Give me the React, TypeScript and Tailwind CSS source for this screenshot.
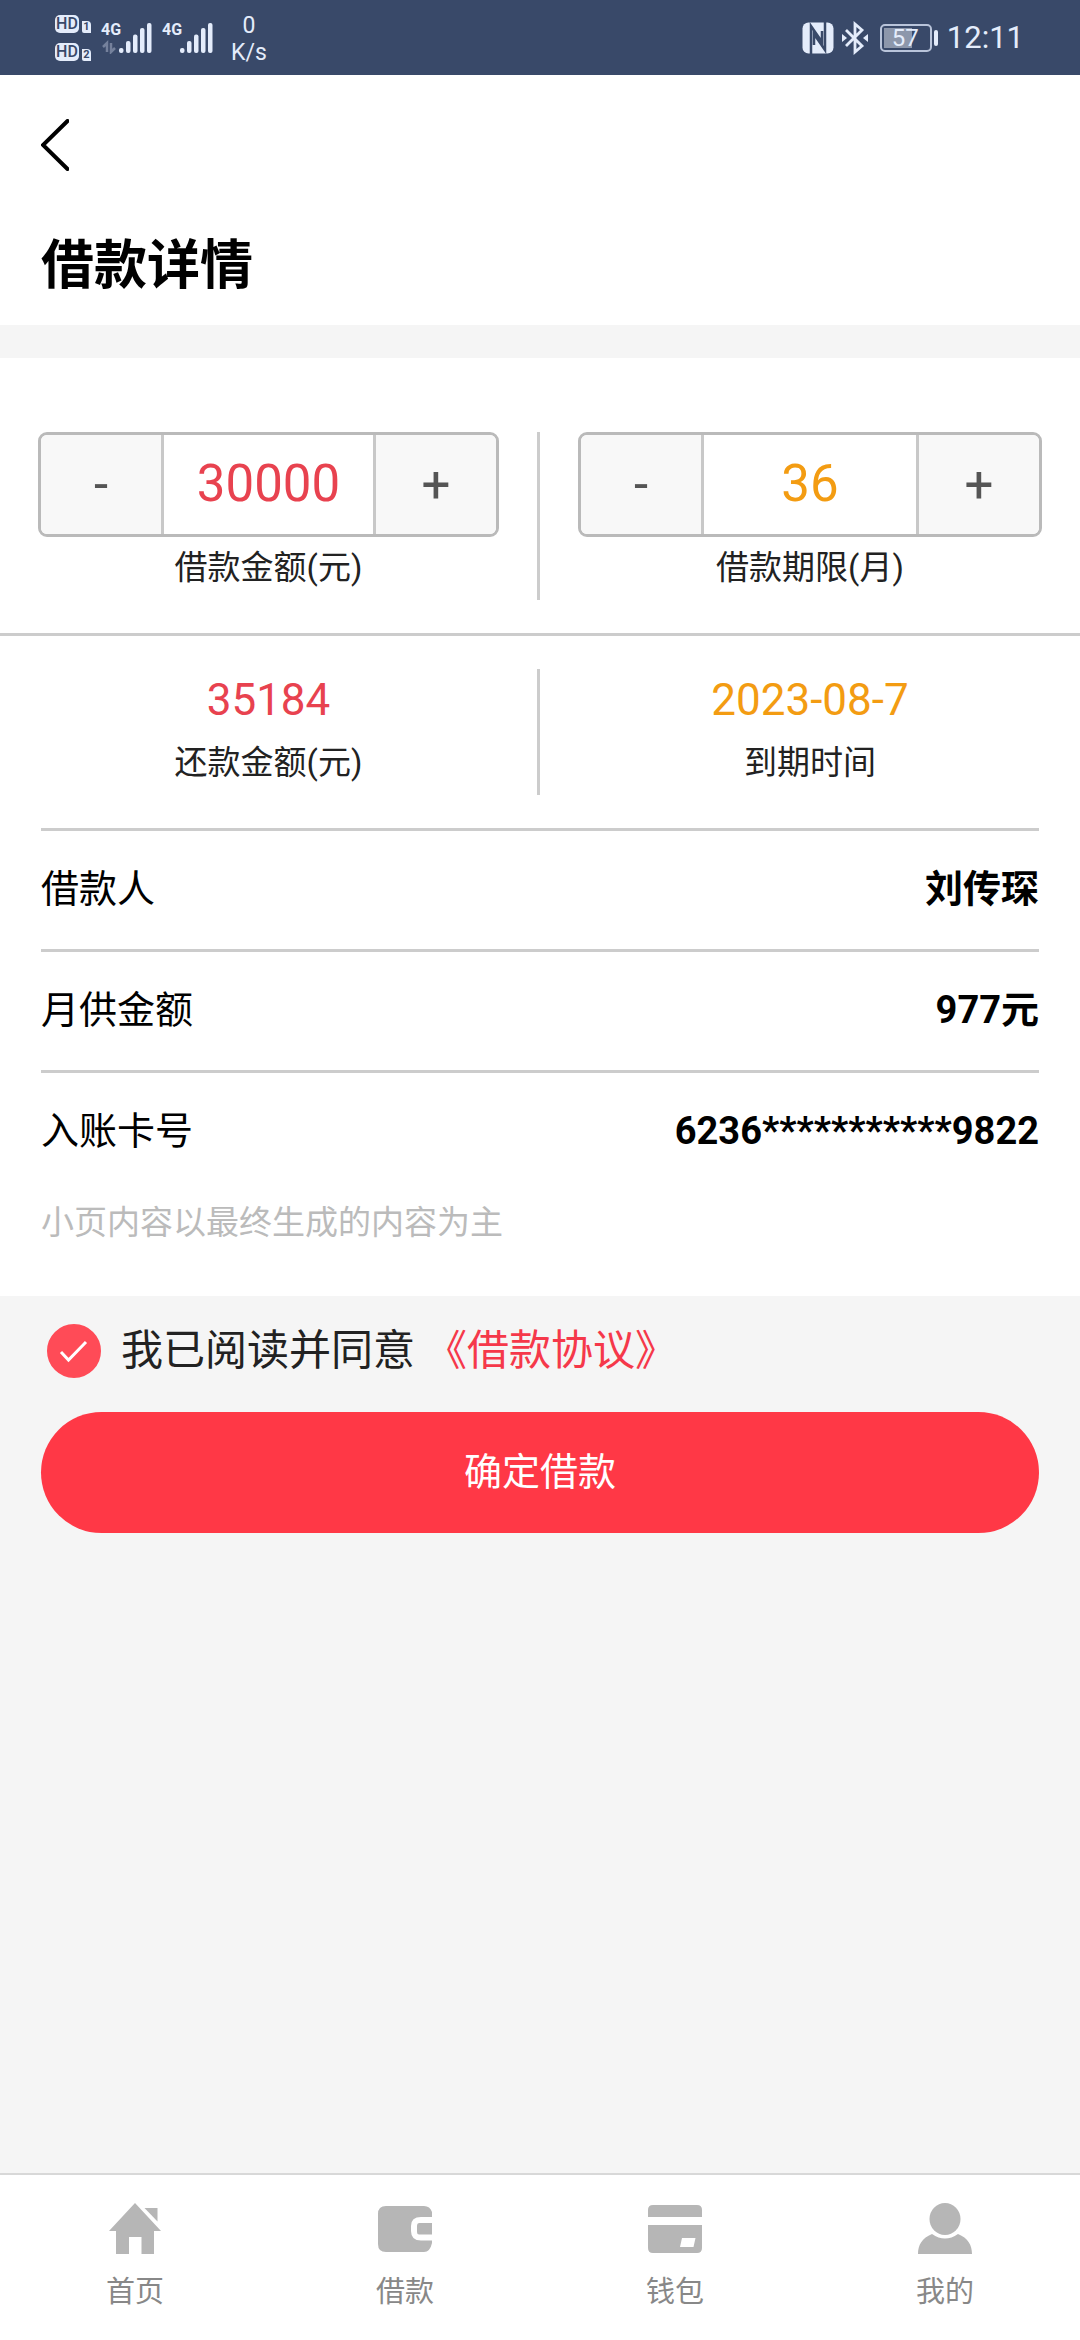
import { useState, type ReactNode } from "react";

type StepperProps = {
  id: string;
  label: string;
  value: number;
  step: number;
  min: number;
  valueClass: string;
  onChange: (value: number) => void;
};

const details = [
  { label: "借款人", value: "刘传琛" },
  { label: "月供金额", value: "977元" },
  { label: "入账卡号", value: "6236***********9822" },
];

const tabs: { label: string; icon: ReactNode }[] = [
  {
    label: "首页",
    icon: (
      <>
        <path d="M28 1 L54 29 H47 V52 H34.500 V35 H22 V52 H9 V29 H2 Z" />
        <path d="M37.500 6 H50.500 V19.500 Z" />
      </>
    ),
  },
  {
    label: "借款",
    icon: (
      <>
        <path d="M9 4 H47 Q53 4 55 10 V15 H44 Q34 15 34 24 V29 Q34 38.500 44 38.500 H55 V41 Q53 50 47 50 H9 Q1 50 1 42 V12 Q1 4 9 4 Z" />
        <path d="M42 21 H55 V32.500 H42 Q40 32.500 40 30 V23.500 Q40 21 42 21 Z" />
      </>
    ),
  },
  {
    label: "钱包",
    icon: (
      <>
        <path d="M6 3 H50 Q55 3 55 8 V15 H1 V8 Q1 3 6 3 Z" />
        <path
          fillRule="evenodd"
          d="M1 23 H55 V46 Q55 51 50 51 H6 Q1 51 1 46 Z M35 36 L33 45 H46.500 L48.500 36 Z"
        />
      </>
    ),
  },
  {
    label: "我的",
    icon: (
      <>
        <ellipse cx="28" cy="17" rx="15.500" ry="16" />
        <path d="M15 32 Q28 41 41 32 C51 36 55 43 55 52 H1 C1 43 5 36 15 32 Z" />
      </>
    ),
  },
];

function HdBadge({ sim }: { sim: number }) {
  return (
    <div className="flex items-end gap-[3px]">
      <span className="flex h-[18px] w-6 items-center justify-center rounded-[5px] bg-[#e4ecfb] text-base leading-none font-medium text-[#394969]">
        HD
      </span>
      <span className="flex h-3 w-[9px] items-center justify-center rounded-tr-[4px] rounded-bl-[2px] bg-[#e4ecfb] text-[11px] leading-none font-bold text-[#394969]">
        {sim}
      </span>
    </div>
  );
}

function Signal({ data }: { data?: boolean }) {
  return (
    <div className="relative h-8 w-[51px]">
      <span className="absolute top-0 left-0 text-base leading-4 font-bold">4G</span>
      <svg viewBox="0 0 51 32" className="h-8 w-[51px]" fill="currentColor" aria-hidden="true">
        <rect x="18" y="26" width="4.500" height="5" rx="2" />
        <rect x="25" y="19" width="4.500" height="12" rx="2" />
        <rect x="32" y="12.500" width="4.500" height="18.500" rx="2" />
        <rect x="39" y="6" width="4.500" height="25" rx="2" />
        <rect x="46" y="1" width="4.500" height="30" rx="2" />
        {data && (
          <path
            d="M6 30 V21 L2 25 M10 21 V30 L14 26"
            fill="none"
            stroke="currentColor"
            strokeWidth="2.500"
            opacity="0.35"
          />
        )}
      </svg>
    </div>
  );
}

function StatusBar() {
  return (
    <div className="flex h-[75px] items-center justify-between bg-[#394969] pr-14 pl-[55px] text-[#e4ecfb]">
      <div className="flex items-center">
        <div className="flex flex-col gap-[10px]">
          <HdBadge sim={1} />
          <HdBadge sim={2} />
        </div>
        <div className="ml-[10px] flex gap-[10px]">
          <Signal data />
          <Signal />
        </div>
        <div className="ml-[18px] pt-[2px] text-center text-[23px] leading-[27px]">
          <p>0</p>
          <p>K/s</p>
        </div>
      </div>
      <div className="flex items-center">
        <svg viewBox="0 0 32 32" className="size-8" aria-hidden="true">
          <rect x="0.500" y="0.500" width="31" height="31" rx="6" fill="#e4ecfb" />
          <path
            d="M9 32 V4 L20 20 V9 M23 0 V28 L12 12 V23"
            fill="none"
            stroke="#394969"
            strokeWidth="2.500"
          />
        </svg>
        <svg
          viewBox="0 0 26 34"
          className="ml-2 h-[34px] w-[26px]"
          fill="none"
          stroke="currentColor"
          strokeWidth="2.800"
          aria-hidden="true"
        >
          <path d="M4 9 L20 25 L13 31 V3 L20 9 L4 25" />
          <path d="M0 13 L5 17 L0 21 Z M26 13 L21 17 L26 21 Z" fill="currentColor" stroke="none" />
        </svg>
        <div className="ml-3 flex h-7 w-[52px] items-center rounded-[5px] border-2 border-[#b9c4da] p-[2px]">
          <div className="flex h-full w-7 items-center bg-[#8d97ab] pl-2 text-2xl leading-none">57</div>
        </div>
        <span className="ml-[2px] h-4 w-1 rounded-sm bg-[#e4ecfb]" />
        <span className="ml-[9px] text-[31px] leading-none">12:11</span>
      </div>
    </div>
  );
}

function Stepper({ id, label, value, step, min, valueClass, onChange }: StepperProps) {
  return (
    <div className="px-[38px]">
      <div className="flex h-[105px] overflow-hidden rounded-[9px] border-[3px] border-[#bababa] text-[51px]">
        <button
          type="button"
          aria-label={`减少${label}`}
          onClick={() => onChange(Math.max(min, value - step))}
          className="w-30 bg-[#f8f8f8] leading-none text-[#555]"
        >
          -
        </button>
        <input
          id={id}
          inputMode="numeric"
          value={value}
          onChange={(e) => onChange(Number(e.target.value) || min)}
          className={`min-w-0 flex-1 border-x-[3px] border-[#c8c8c8] bg-white text-center outline-none ${valueClass}`}
        />
        <button
          type="button"
          aria-label={`增加${label}`}
          onClick={() => onChange(value + step)}
          className="w-30 bg-[#f8f8f8] leading-none text-[#555]"
        >
          +
        </button>
      </div>
      <label htmlFor={id} className="block pb-[2px] text-center text-[33px] leading-[61px] text-[#222]">
        {label}
      </label>
    </div>
  );
}

export default function App() {
  const [amount, setAmount] = useState(30000);
  const [months, setMonths] = useState(36);
  const [agreed, setAgreed] = useState(true);

  return (
    <div className="flex min-h-screen flex-col bg-[#f5f5f5] font-[Roboto,'Noto_Sans_CJK_SC',sans-serif] text-black">
      <StatusBar />

      <header className="bg-white px-[41px] pt-11 pb-[23px]">
        <button type="button" aria-label="返回" className="block">
          <svg
            viewBox="0 0 28 52"
            className="h-[52px] w-7"
            fill="none"
            stroke="currentColor"
            strokeWidth="4"
            strokeLinecap="round"
            aria-hidden="true"
          >
            <path d="M26.500 2 L2 26 L26.500 50" />
          </svg>
        </button>
        <h1 className="mt-[59px] text-[53px] leading-[72px] font-bold">借款详情</h1>
      </header>

      <main className="flex-1">
        <section className="mt-[33px] bg-white pt-[74px] pb-[41px]">
          <div className="grid grid-cols-2 border-b-[3px] border-[#ccc] pb-[33px]">
            <div className="border-r-[3px] border-[#ccc]">
              <Stepper
                id="amount"
                label="借款金额(元)"
                value={amount}
                step={1000}
                min={1000}
                valueClass="text-[#e8424f]"
                onChange={setAmount}
              />
            </div>
            <Stepper
              id="months"
              label="借款期限(月)"
              value={months}
              step={1}
              min={1}
              valueClass="text-[#f39c12]"
              onChange={setMonths}
            />
          </div>

          <div className="grid grid-cols-2 py-[33px] text-center">
            <div className="border-r-[3px] border-[#ccc]">
              <p className="text-[44px] leading-[62px] text-[#e8424f]">35184</p>
              <p className="text-[33px] leading-[64px] text-[#222]">还款金额(元)</p>
            </div>
            <div>
              <p className="text-[44px] leading-[62px] text-[#f39c12]">2023-08-7</p>
              <p className="text-[33px] leading-[64px] text-[#222]">到期时间</p>
            </div>
          </div>

          <dl className="mx-[41px] text-[38px] leading-[116px]">
            {details.map((item) => (
              <div key={item.label} className="flex justify-between border-t-[3px] border-[#ccc] pb-[2px]">
                <dt>{item.label}</dt>
                <dd className="font-bold">{item.value}</dd>
              </div>
            ))}
          </dl>
          <p className="px-[41px] text-[33px] leading-[64px] text-[#bbb]">小页内容以最终生成的内容为主</p>
        </section>

        <section className="px-[41px] pt-7">
          <div className="flex items-center pl-[6px] text-[42px] leading-[54px]">
            <div className="relative size-[54px]">
              <input
                id="agree"
                type="checkbox"
                checked={agreed}
                onChange={(e) => setAgreed(e.target.checked)}
                className="block size-[54px] appearance-none rounded-full border-2 border-[#ff4b57] checked:bg-[#ff4b57]"
              />
              {agreed && (
                <svg
                  viewBox="0 0 54 54"
                  className="pointer-events-none absolute inset-0"
                  fill="none"
                  stroke="white"
                  strokeWidth="3"
                  aria-hidden="true"
                >
                  <path d="M14 28 L21.500 36 L39 18" />
                </svg>
              )}
            </div>
            <label htmlFor="agree" className="ml-5 text-[#222]">
              我已阅读并同意
            </label>
            <a href="#agreement" className="ml-[10px] text-[#f5384a]">
              《借款协议》
            </a>
          </div>
          <button
            type="button"
            disabled={!agreed}
            className="mt-[34px] block h-[121px] w-full rounded-full bg-[#ff3846] text-[38px] text-white"
          >
            确定借款
          </button>
        </section>
      </main>

      <nav className="grid grid-cols-4 border-t-2 border-[#d8d8d8] bg-white pt-[27px] pb-[22px]">
        {tabs.map((tab) => (
          <a key={tab.label} href="#" className="flex flex-col items-center">
            <svg viewBox="0 0 56 56" className="size-14" fill="#b6b6b6" aria-hidden="true">
              {tab.icon}
            </svg>
            <span className="mt-2 text-[29px] leading-[52px] text-[#888]">{tab.label}</span>
          </a>
        ))}
      </nav>
    </div>
  );
}
